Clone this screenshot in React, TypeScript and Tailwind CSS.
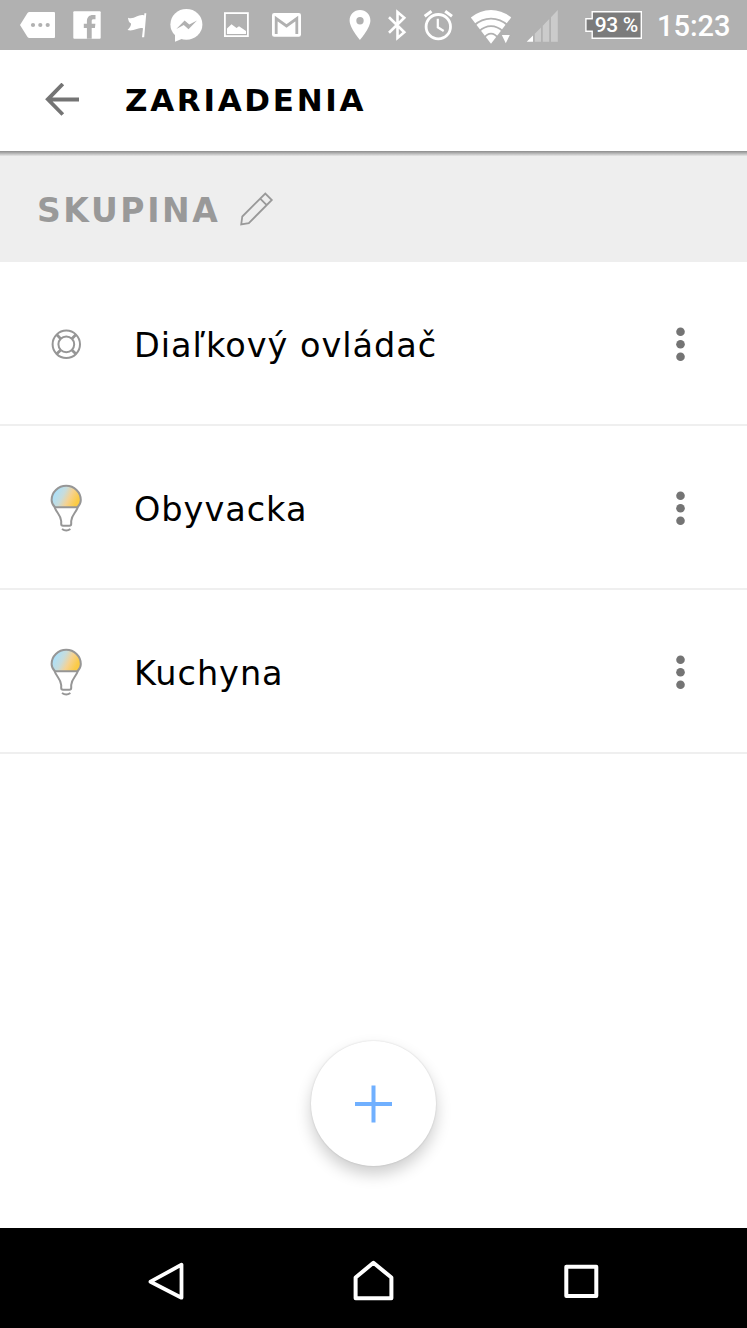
import type { ReactNode } from "react";

type DeviceKind = "remote" | "bulb";

interface Device {
  name: string;
  kind: DeviceKind;
}

const devices: Device[] = [
  { name: "Diaľkový ovládač", kind: "remote" },
  { name: "Obyvacka", kind: "bulb" },
  { name: "Kuchyna", kind: "bulb" },
];

function StatusBar() {
  return (
    <header className="flex h-[50px] shrink-0 items-center bg-[#b1b1b1] pl-[19px] text-white">
      {/* Message */}
      <svg className="h-[50px] w-[38px]" viewBox="19 0 38 50" fill="currentColor">
        <path d="M20 25 27.5 13Q28.2 12 29.5 12H54Q55 12 55 13V37Q55 38 54 38H29.5Q28.2 38 27.5 37Z" />
        <g fill="#b1b1b1">
          <circle cx="33" cy="25" r="2.1" />
          <circle cx="40.3" cy="25" r="2.1" />
          <circle cx="47.7" cy="25" r="2.1" />
        </g>
      </svg>
      {/* Facebook */}
      <svg className="ml-4 h-[50px] w-[28px]" viewBox="73 0 28 50">
        <rect x="73.3" y="11.3" width="27.4" height="27.4" rx="1" fill="currentColor" />
        <path
          d="M86.9 38.7V28H83.8V23.8H86.9V21.2C86.9 17 89.5 15 92.8 15H95.5V19.2H93.8C92.2 19.2 91.7 19.8 91.7 21.2V23.8H95.4L94.9 28H91.7V38.7Z"
          fill="#b1b1b1"
        />
      </svg>
      {/* Flag */}
      <svg className="ml-[25px] h-[50px] w-[22px]" viewBox="126 0 22 50" fill="currentColor">
        <path d="M144.4 13.3 146.3 13.3 144.2 37.2 142 37.2 143 28.3C138 26.5 134 32 127.5 30 130.5 27.5 131.2 25.2 131 23.6 128.8 22.5 128.3 20.2 128 17.7 134.3 20 138.5 13.5 144.2 15.4Z" />
      </svg>
      {/* Messenger */}
      <svg className="ml-[22px] h-[50px] w-[33px]" viewBox="170 0 33 50" fill="currentColor">
        <ellipse cx="186.4" cy="24.4" rx="16" ry="15.3" />
        <path d="M175 33V41.8L184 38Z" />
        <path d="M176.3 29 184.6 20.5 189.3 24.5 197 20.5 188.5 29.2 183.8 25Z" fill="#b1b1b1" />
      </svg>
      {/* Picture */}
      <svg className="ml-5 h-[50px] w-[27px]" viewBox="223 0 27 50">
        <rect x="224.9" y="13.1" width="23" height="23" fill="none" stroke="currentColor" strokeWidth="1.8" />
        <path d="M227 34V28.5L231.5 24.3 236.5 28 239 26.3 246 31V34Z" fill="currentColor" />
      </svg>
      {/* Gmail */}
      <svg className="ml-[21px] h-[50px] w-[31px]" viewBox="271 0 31 50">
        <rect x="272" y="13" width="29" height="23.7" rx="2.2" fill="currentColor" />
        <path d="M276.2 34V18.5L286.5 26 296.8 18.5V34" fill="none" stroke="#b1b1b1" strokeWidth="2.8" />
      </svg>
      {/* Location */}
      <svg className="ml-[46px] h-[50px] w-[24px]" viewBox="348 0 24 50" fill="currentColor" fillRule="evenodd">
        <path d="M360 10C354.2 10 349.6 14.6 349.6 20.5 349.6 28 360 40 360 40S370.4 28 370.4 20.5C370.4 14.6 365.8 10 360 10ZM360 17A3.7 3.7 0 1 1 360 24.4 3.7 3.7 0 0 1 360 17Z" />
      </svg>
      {/* Bluetooth */}
      <svg className="ml-[15px] h-[50px] w-[21px]" viewBox="387 0 21 50" fill="none" stroke="currentColor" strokeWidth="2.6">
        <path d="M389 17.3 404.3 32.2 397.5 38V12L404.3 17.8 389 32.7" />
      </svg>
      {/* Alarm */}
      <svg className="ml-[15px] h-[50px] w-[31px]" viewBox="423 0 31 50" fill="none" stroke="currentColor">
        <circle cx="438.3" cy="26.7" r="12.2" strokeWidth="2.8" />
        <path d="M437.8 18.7V27.3L443.7 31" strokeWidth="2.2" />
        <path d="M424.7 16.3 431.5 11.2M445.2 11.2 452 16.3" strokeWidth="3" />
      </svg>
      {/* Wifi */}
      <svg className="ml-4 h-[50px] w-[42px]" viewBox="470 0 42 50">
        <path d="M491 43.8 470.8 17.5Q480 10 491 10T511.2 17.5Z" fill="currentColor" />
        <g fill="none" stroke="#b1b1b1" strokeWidth="1.8">
          <path d="M474 25.5Q481.5 18.6 491 18.6T508 25.5" />
          <path d="M479 31.5Q484.5 26.2 491 26.2T503 31.5" />
          <path d="M484 38Q487 33.7 491 33.7T498 38" />
        </g>
        <path d="M500.5 33.5H512L505.7 46.5Z" fill="#b1b1b1" />
        <path d="M501.8 35H509.8L505.8 43.3Z" fill="currentColor" />
      </svg>
      {/* Signal */}
      <svg className="ml-[14px] h-[50px] w-[33px]" viewBox="526 0 33 50">
        <path d="M526.7 41.8 533 35.4V41.8Z" fill="currentColor" />
        <path
          d="M534.8 41.8V33.7L541 27.5V41.8ZM542.8 41.8V25.7L549.2 19V41.8ZM551 41.8V17.2L557.8 10V41.8Z"
          fill="#cbcbcb"
        />
      </svg>
      {/* Battery */}
      <svg className="ml-[26px] h-[50px] w-[58px]" viewBox="585 0 58 50">
        <path d="M592.2 11.7H641.3V38.3H592.2V31.3H585.9V18.7H592.2Z" fill="#7b7b7b" stroke="currentColor" strokeWidth="1.4" />
        <text x="594.7" y="32" className="text-[21px] font-medium" fontFamily="Roboto, sans-serif" textLength="43.5" fill="currentColor">
          93 %
        </text>
      </svg>
      <span className="ml-[14px] pt-[2px] font-['Roboto',sans-serif] text-[29px] leading-[48px] font-medium whitespace-nowrap">
        15:23
      </span>
    </header>
  );
}

function BulbIcon() {
  return (
    <svg className="h-12 w-9" viewBox="0 0 36 48" fill="none" stroke="#969696" strokeWidth="2">
      <defs>
        <linearGradient id="glow" x1="4" y1="6" x2="31" y2="20" gradientUnits="userSpaceOnUse">
          <stop offset="0.15" stopColor="#aee0f7" />
          <stop offset="0.4" stopColor="#c8dcdb" />
          <stop offset="0.62" stopColor="#f5d292" />
          <stop offset="0.9" stopColor="#fbcb45" />
        </linearGradient>
      </defs>
      <path d="M7 23.2C4.5 21 3.6 18.5 3.6 16A14.6 14.2 0 0 1 32.8 16C32.8 18.5 31.9 21 29.4 23.2Z" fill="url(#glow)" />
      <path d="M6.5 23C8.5 29 12.7 30.5 13.2 37V40Q13.2 41.8 15 41.8H21.4Q23.2 41.8 23.2 40V37C23.7 30.5 27.9 29 29.9 23" />
      <path d="M14 45Q18.2 48 22.4 45" />
    </svg>
  );
}

function RemoteIcon() {
  return (
    <svg className="h-9 w-9" viewBox="0 0 36 36" fill="none" stroke="#969696" strokeWidth="2">
      <circle cx="18.3" cy="18.3" r="13.7" />
      <circle cx="18.3" cy="18.3" r="7.9" />
      <path d="M8.6 8.6 12.7 12.7M28 8.6 23.9 12.7M8.6 28 12.7 23.9M28 28 23.9 23.9" strokeWidth="2.8" />
    </svg>
  );
}

function DeviceRow({ device, icon }: { device: Device; icon: ReactNode }) {
  return (
    <li className="flex h-[164px] items-center border-b-2 border-[#efefef] pt-[2px] pr-[62px] pl-12">
      <span className="flex w-9 justify-center">{icon}</span>
      <span className="ml-[50px] flex-1 pt-[3px] text-[33.5px] leading-none tracking-[0.98px] whitespace-nowrap text-black">
        {device.name}
      </span>
      <svg className="h-9 w-[9px]" viewBox="0 0 9 36" fill="#747474">
        <circle cx="4.5" cy="5.8" r="4.3" />
        <circle cx="4.5" cy="18.3" r="4.3" />
        <circle cx="4.5" cy="30.8" r="4.3" />
      </svg>
    </li>
  );
}

function NavBar() {
  return (
    <nav className="flex h-[100px] shrink-0 items-center justify-between bg-black pt-2 pr-[146px] pl-[147px]">
      <svg className="h-11 w-[40px]" viewBox="0 0 40 44" fill="none" stroke="white" strokeWidth="3.8" strokeLinejoin="round">
        <path d="M34.5 4.7V37.7L3.5 21.7Z" />
      </svg>
      <svg className="h-11 w-[44px]" viewBox="0 0 44 44" fill="none" stroke="white" strokeWidth="4" strokeLinejoin="round">
        <path d="M3.6 38.2V17.5L21.4 2.8 39.4 17.5V38.2Z" />
      </svg>
      <svg className="h-11 w-[40px]" viewBox="0 0 40 44" fill="none" stroke="white" strokeWidth="4" strokeLinejoin="round">
        <path d="M5.3 6.8H35.3V36H5.3Z" />
      </svg>
    </nav>
  );
}

export default function App() {
  return (
    <div className="flex h-[1328px] w-[747px] flex-col overflow-hidden bg-white font-['DejaVu_Sans',Verdana,sans-serif]">
      <StatusBar />

      <div className="flex h-[101px] shrink-0 items-center pl-[44px]">
        <svg className="h-9 w-9" viewBox="0 0 36 36" fill="none" stroke="#747474" strokeWidth="3.8">
          <path d="M35 16.5H4.5M18.8 1 3.8 16.3 18.8 31.5" />
        </svg>
        <h1 className="ml-[45px] text-[31px] leading-none font-bold tracking-[2.7px] text-black">ZARIADENIA</h1>
      </div>

      {/* Toolbar shadow */}
      <div className="h-[5px] shrink-0 bg-linear-to-b from-[#8c8c8c] to-[#e6e6e6]" />

      <section className="flex h-[106px] shrink-0 items-center bg-[#eeeeee] pl-[37px]">
        <h2 className="pt-[2px] text-[33px] leading-none font-bold tracking-[2.6px] text-[#999999]">SKUPINA</h2>
        <svg className="ml-[19px] h-9 w-9" viewBox="0 0 36 36" fill="none" stroke="#999999" strokeWidth="1.8">
          <path d="M2.2 33.5 3.3 25.5 26.3 2.5 32.8 9 9.8 32.1ZM21.2 7.6 27.7 14.1" />
        </svg>
      </section>

      <ul className="shrink-0">
        {devices.map((d) => (
          <DeviceRow key={d.name} device={d} icon={d.kind === "bulb" ? <BulbIcon /> : <RemoteIcon />} />
        ))}
      </ul>

      <main className="flex flex-1 items-end justify-center pb-[62px]">
        <button className="flex size-[125px] items-center justify-center rounded-full bg-white shadow-[0_0_2px_rgba(0,0,0,0.15),0_8px_16px_rgba(0,0,0,0.2)]">
          <svg className="size-[38px]" viewBox="0 0 38 38" stroke="#70b0ff" strokeWidth="4">
            <path d="M18.5 0.5V37.5M0 19H37" />
          </svg>
        </button>
      </main>

      <NavBar />
    </div>
  );
}
